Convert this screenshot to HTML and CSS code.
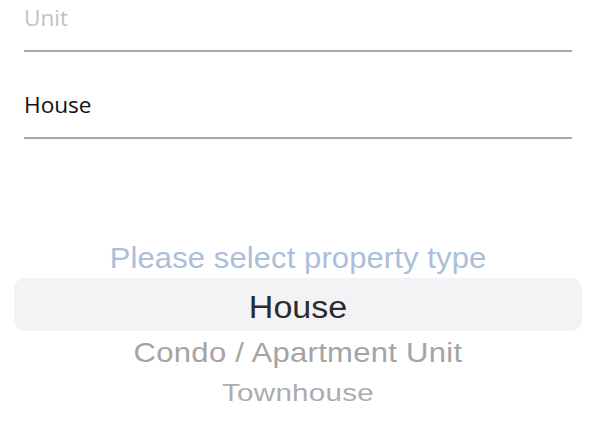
FILE: index.html
```html
<!DOCTYPE html>
<html>
<head>
<meta charset="utf-8">
<link rel="stylesheet" href="styles.css">
</head>
<body>
<div class="form">
  <div class="field field-first"><span class="placeholder">Unit</span></div>
  <div class="field field-second"><span class="value">House</span></div>
</div>
<div class="picker">
  <div class="row row-title"><span class="txt">Please select property type</span></div>
  <div class="row row-selected"><span class="txt">House</span></div>
  <div class="row row-next"><span class="txt">Condo / Apartment Unit</span></div>
  <div class="row row-far"><span class="txt">Townhouse</span></div>
</div>
</body>
</html>
```
FILE: styles.css
```css
html, body {
  margin: 0;
  padding: 0;
  background: #ffffff;
  width: 596px;
  height: 446px;
  overflow: hidden;
}

.form {
  margin: 0 24px;
  padding-top: 3px;
  font-family: "Open Sans", "Noto Sans", sans-serif;
  font-size: 22.6px;
  line-height: 30px;
}

.field {
  padding: 0 0 17px 0;
  border-bottom: 2px solid #a8a8a8;
}

.field-second {
  margin-top: 38px;
}

.placeholder {
  color: #c2c2c2;
}

.value {
  color: #111111;
}

.picker {
  margin-top: 99px;
  display: flex;
  flex-direction: column;
  font-family: "Liberation Sans", Arial, sans-serif;
  text-align: center;
}

.row .txt {
  display: inline-block;
  white-space: nowrap;
}

.row-title {
  height: 40px;
  line-height: 40px;
  font-size: 31px;
  letter-spacing: 0.1px;
  color: #abbedb;
}
.row-title .txt {
  transform: scaleY(0.95);
}

.row-selected {
  margin: 0 14px;
  height: 49px;
  padding-top: 4px;
  line-height: 50px;
  font-size: 34px;
  color: #2c2c2c;
  background: #f3f3f5;
  border-radius: 11px;
  overflow: hidden;
}
.row-selected .txt {
  transform: scaleY(0.93);
  line-height: 50px;
}

.row-next {
  height: 44px;
  line-height: 44px;
  font-size: 31px;
  letter-spacing: 0.3px;
  color: #a4a4a4;
}
.row-next .txt {
  transform: scaleY(0.9);
}

.row-far {
  height: 36px;
  line-height: 36px;
  font-size: 29.5px;
  letter-spacing: 0.3px;
  color: #adadad;
}
.row-far .txt {
  transform: scaleY(0.8);
}
```
